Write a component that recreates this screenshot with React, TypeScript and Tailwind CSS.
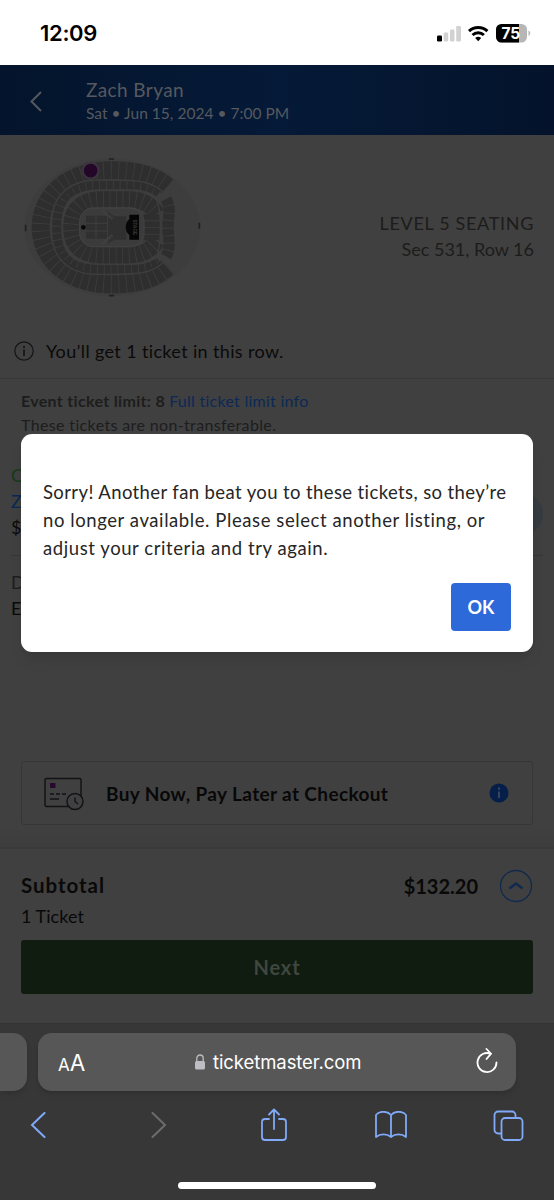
function StatusBar() {
  return (
    <div className="flex h-[65px] items-center justify-between bg-white pr-[21px] pl-10 font-['Inter',sans-serif]">
      <span className="mt-[2px] text-[22px] font-semibold tracking-[-0.3px] text-black">12:09</span>
      <svg className="h-[22px] w-[98px]" viewBox="0 0 98 22" fill="none">
        <rect x="2" y="13.5" width="5" height="6" rx="1.3" fill="#000" />
        <rect x="8.7" y="10.5" width="4.5" height="9" rx="1.2" fill="#d2d2d2" />
        <rect x="15" y="7.5" width="4.5" height="12" rx="1.2" fill="#d2d2d2" />
        <rect x="21.2" y="4" width="4.8" height="15.5" rx="1.2" fill="#d2d2d2" />
        <g stroke="#000" strokeWidth="3">
          <path d="M34 9.2a13.5 13.5 0 0 1 18.400 0" />
          <path d="M37.500 13a8.400 8.400 0 0 1 11.400 0" />
        </g>
        <path d="M40.200 16a4.500 4.500 0 0 1 6 0l-3 3.300z" fill="#000" />
        <rect x="61" y="2" width="31" height="18.500" rx="5.500" fill="#b6b6b6" />
        <path d="M66.500 2H84v18.500H66.500A5.500 5.500 0 0 1 61 15V7.500A5.500 5.500 0 0 1 66.500 2z" fill="#000" />
        <path d="M93.500 8.500c2.300.8 2.300 4.600 0 5.400z" fill="#b6b6b6" />
        <text x="75.800" y="17" textAnchor="middle" fontSize="15.500" fontWeight="700" fill="#fff">75</text>
      </svg>
    </div>
  );
}

function SeatMap() {
  return (
    <svg className="h-[160px] w-[210px]" viewBox="0 0 630 480" fill="none">
      <ellipse cx="307" cy="247" rx="264" ry="206" fill="#3d3d3d" />
      <g stroke="#2e2e2e">
        <path d="M472 124C435 92 385 76 305 76C170 76 92 155 92 247S170 418 305 418C385 418 435 402 474 366" strokeWidth="54" strokeDasharray="20 2.500" />
        <path d="M448 143C420 123 390 121 350 121H265C180 121 140 160 140 247S180 373 265 373H350C390 373 420 371 448 350" strokeWidth="27" strokeDasharray="18 2.500" />
        <path d="M440 206C420 172 385 163 350 163H275C215 163 183 195 183 247S215 331 275 331H350C385 331 420 322 440 288" strokeWidth="49" strokeDasharray="17 2.500" />
        <path d="M468 162C484 190 474 215 474 247S484 306 468 334" strokeWidth="34" strokeDasharray="20 2.500" strokeLinejoin="round" />
        <path d="M425 208V286" strokeWidth="50" strokeDasharray="18 2.500" />
      </g>
      <g stroke="#3d3d3d" strokeWidth="4">
        <path d="M462 144C425 108 385 105 305 105H265C170 105 122 160 122 247S170 388 265 388H305C385 388 425 386 462 350" />
        <path d="M440 166C415 136 390 135 350 135H275C195 135 158 175 158 247S195 358 275 358H350C390 358 415 356 440 330C455 300 455 195 440 166z" />
      </g>
      <rect x="209" y="189" width="193" height="116" rx="42" fill="#3b3b3b" stroke="#414141" strokeWidth="4" />
      <path d="M228 212h65v-12l20 14h36v70h-36l-20 12v-15h-65z" fill="#303030" />
      <path d="M228 235h65M228 258h65M258 212v69M293 212v72" stroke="#414141" strokeWidth="2.500" />
      <path d="M275 196l32 25M275 298l32-27" stroke="#404040" strokeWidth="8" strokeDasharray="7 2" />
      <path d="M358 209h29v75h-29v-14c-14-8-14-39 0-47z" fill="#060606" />
      <text x="372" y="247" transform="rotate(90 372 247)" textAnchor="middle" dominantBaseline="central" fontSize="14" fontWeight="700" fill="#3a3a3a" className="font-['Liberation_Sans',sans-serif]">STAGE</text>
      <circle cx="220" cy="247" r="7" fill="#080808" />
      <path d="M297 42h15M297 452h15M47 239v20M568 233v18" stroke="#202020" strokeWidth="5" />
      <circle cx="242" cy="77" r="24" fill="#240629" stroke="#3b343e" strokeWidth="7" />
    </svg>
  );
}

function EventHeader() {
  return (
    <header className="flex h-[70px] items-center bg-linear-to-r from-[#04142c] via-[#051a38] to-[#04132b] text-[#56595e]">
      <svg className="ml-[29px] h-6 w-[14px]" viewBox="0 0 14 24" fill="none" stroke="#55585d" strokeWidth="2">
        <path d="M12 4L2.500 13.500 12 23" />
      </svg>
      <div className="ml-[43px] pt-[3px]">
        <div className="text-[19px] leading-6 tracking-[0.4px]">Zach Bryan</div>
        <div className="text-[15.5px] leading-[23px] tracking-[0.03px]">Sat • Jun 15, 2024 • 7:00 PM</div>
      </div>
    </header>
  );
}

function BuyLater() {
  return (
    <div className="mx-[21px] flex h-[64px] items-center rounded-[3px] border border-[#363639] pr-[23px] pl-[22px]">
      <svg className="mt-px h-[34px] w-[42px]" viewBox="0 0 42 34" fill="none" stroke="#111116" strokeWidth="1.400">
        <rect x="1" y="1.500" width="36" height="28" rx="1.500" />
        <rect x="6" y="6" width="5.500" height="5" fill="#260a2b" stroke="none" />
        <path d="M6 17h18" strokeDasharray="4 2" />
        <path d="M6 22h9" />
        <circle cx="31" cy="24.500" r="8" fill="#404040" />
        <path d="M31 20.500v4l3 2.500" />
      </svg>
      <span className="mt-[2px] ml-[20px] text-[19px] font-bold tracking-[0.37px] text-[#080808]">Buy Now, Pay Later at Checkout</span>
      <svg className="ml-auto h-[20px] w-[20px]" viewBox="0 0 20 20">
        <circle cx="10" cy="10" r="9.500" fill="#061f4a" />
        <path d="M10 8.500v6.500M10 4.500v2.200" stroke="#404a58" strokeWidth="1.800" />
      </svg>
    </div>
  );
}

function Checkout() {
  return (
    <section className="h-[176px] border-t-2 border-[#3a3a3a] px-[21px]">
      <div className="flex h-[91px] justify-between pt-[21px]">
        <div className="text-[#090909]">
          <div className="text-[20.5px] leading-[31px] font-bold tracking-[0.95px]">Subtotal</div>
          <div className="text-[18px] leading-[30px] tracking-[0.05px]">1 Ticket</div>
        </div>
        <div className="flex h-[31px] items-center gap-[21px]">
          <span className="text-[20px] font-bold text-[#090909]">$132.20</span>
          <svg className="h-[34px] w-[34px]" viewBox="0 0 34 34" fill="none" stroke="#10294e">
            <circle cx="17" cy="17" r="15.500" strokeWidth="1.300" />
            <path d="M10.500 19.500l6.500-5 6.500 5" strokeWidth="2.500" />
          </svg>
        </div>
      </div>
      <button className="flex h-[54px] w-full items-center justify-center rounded-[3px] bg-[#0f1c0f] text-[20px] font-bold tracking-[0.9px] text-[#404640]">Next</button>
    </section>
  );
}

function BrowserBar() {
  return (
    <footer className="h-[177px] border-t border-[#333] bg-[#373737] font-['Inter',sans-serif]">
      <div className="flex gap-[11px] pt-[9px]">
        <div className="h-[58px] w-[27px] rounded-r-[14px] bg-[#575757] shadow-md" />
        <div className="flex h-[58px] w-[478px] items-center rounded-[14px] bg-[#575757] pr-[18px] pl-5 text-white shadow-md">
          <div className="mt-[2px] flex w-[136px] items-baseline">
            <span className="text-[17px] leading-none">A</span>
            <span className="text-[22.5px] leading-none">A</span>
          </div>
          <svg className="h-4 w-[12px]" viewBox="0 0 12 16" fill="none">
            <rect x="1" y="7" width="10" height="8.500" rx="1.500" fill="#bdbdc3" />
            <path d="M2.800 8V4.200a3.200 3.200 0 0 1 6.400 0V8" stroke="#bdbdc3" strokeWidth="1.300" />
          </svg>
          <span className="mt-[2px] ml-[7px] text-[18.5px] tracking-[-0.08px]">ticketmaster.com</span>
          <svg className="ml-auto h-[28px] w-[22px]" viewBox="0 0 22 28" fill="none" stroke="#fff" strokeWidth="1.800" strokeLinecap="round">
            <path d="M20.500 14.500A9.500 9.500 0 1 1 14.500 5.700M10.500 1l4.500 4.700-4.500 5.300" />
          </svg>
        </div>
      </div>
      <nav className="mt-[16px] flex h-[36px] items-center justify-between pr-[30px] pl-[30px]">
        <svg className="h-[26px] w-[16px]" viewBox="0 0 16 26" fill="none" stroke="#80a9f7" strokeWidth="2" strokeLinecap="round">
          <path d="M14.500 1L2 13l12.500 12" />
        </svg>
        <svg className="mr-px ml-[22px] h-[26px] w-[16px]" viewBox="0 0 16 26" fill="none" stroke="#6c6c6c" strokeWidth="2" strokeLinecap="round">
          <path d="M1.500 1L14 13 1.500 25" />
        </svg>
        <svg className="ml-[10px] h-[34px] w-[26px]" viewBox="0 0 26 34" fill="none" stroke="#80a9f7" strokeWidth="1.800" strokeLinecap="round" strokeLinejoin="round">
          <path d="M8 11H4a3 3 0 0 0-3 3v15a3 3 0 0 0 3 3h18a3 3 0 0 0 3-3V14a3 3 0 0 0-3-3h-4M13 21V1.500M8 6.500l5-5 5 5" />
        </svg>
        <svg className="mr-[3px] ml-[5px] h-[28px] w-[32px]" viewBox="0 0 32 28" fill="none" stroke="#80a9f7" strokeWidth="1.800" strokeLinejoin="round">
          <path d="M16 4C12-.4 4-.2 1 4v22c4-3.500 11-3.500 15 0 4-3.500 11-3.500 15 0V4C28-.2 20-.4 16 4zv22" />
        </svg>
        <svg className="h-[31px] w-[31px]" viewBox="0 0 31 31" fill="none" stroke="#80a9f7" strokeWidth="1.800">
          <path d="M8 23.500H5A3.500 3.500 0 0 1 1.500 20V5A3.500 3.500 0 0 1 5 1.500h14A3.500 3.500 0 0 1 22.500 5v3" />
          <rect x="8.500" y="8" width="21" height="22" rx="3.500" />
        </svg>
      </nav>
      <div className="mx-auto mt-[39px] h-[7px] w-[198px] rounded-full bg-white" />
    </footer>
  );
}

function Dialog() {
  return (
    <div className="absolute top-[434px] left-[21px] h-[218px] w-[512px] rounded-[11px] bg-white px-[22px] pt-[44px] shadow-lg">
      <p className="text-[18.5px] leading-[28px] text-[#262626]">
        <span className="block whitespace-nowrap tracking-[0.39px]">Sorry! Another fan beat you to these tickets, so they’re</span>
        <span className="block whitespace-nowrap tracking-[0.58px]">no longer available. Please select another listing, or</span>
        <span className="block whitespace-nowrap tracking-[0.58px]">adjust your criteria and try again.</span>
      </p>
      <button className="mt-[21px] ml-auto flex h-[48px] w-[60px] items-center justify-center rounded-[4px] bg-[#2e69da] text-[18px] font-bold text-white">OK</button>
    </div>
  );
}

export default function App() {
  return (
    <div className="relative h-[1200px] w-[554px] overflow-hidden bg-[#404040] font-['Lato',sans-serif]">
      <StatusBar />
      <EventHeader />
      <section className="h-[244px] border-b border-[#373737]">
        <div className="flex justify-between pt-[10px] pr-[20px] pl-[10px]">
          <SeatMap />
          <div className="pt-[65px] text-right text-[18px] leading-[26px] text-[#1c1c1c]">
            <div className="tracking-[0.68px]">LEVEL 5 SEATING</div>
            <div>Sec 531, Row 16</div>
          </div>
        </div>
        <div className="mt-[34px] flex h-6 items-center pl-[14px] text-[#0a0a0a]">
          <svg className="h-5 w-5" viewBox="0 0 20 20" fill="none" stroke="#151515">
            <circle cx="10" cy="10" r="9.200" strokeWidth="1.200" />
            <path d="M10 8.500V15M10 5v2" strokeWidth="1.700" />
          </svg>
          <span className="ml-3 text-[18px] tracking-[0.36px]">You’ll get 1 ticket in this row.</span>
        </div>
      </section>
      <section className="h-[83px] pt-[10px] pl-[21px] text-[16px] leading-[24px] text-[#1d1d1d]">
        <div>
          <span className="font-bold tracking-[0.32px]">Event ticket limit: 8</span>{' '}
          <span className="tracking-[0.26px] text-[#0c2956]">Full ticket limit info</span>
        </div>
        <div className="tracking-[0.36px]">These tickets are non-transferable.</div>
      </section>
      <section className="mx-[11px] flex h-[94px] justify-between border-b border-[#373737] text-[18px] leading-[26px]">
        <div>
          <div className="text-[#173a17]">C</div>
          <div className="text-[#0b2854]">Z</div>
          <div className="text-[#0a0a0a]">$</div>
        </div>
        <div className="mt-[31px] h-[42px] w-[42px] rounded-full bg-[#363b42]" />
      </section>
      <section className="h-[205px] pt-[13px] pl-[11px] text-[18px] leading-[26px]">
        <div className="text-[#1d1d1d]">D</div>
        <div className="text-[#0a0a0a]">E</div>
      </section>
      <BuyLater />
      <div className="h-[22px] bg-linear-to-b from-[#404040] to-[#3d3d3d]" />
      <Checkout />
      <BrowserBar />
      <Dialog />
    </div>
  );
}
